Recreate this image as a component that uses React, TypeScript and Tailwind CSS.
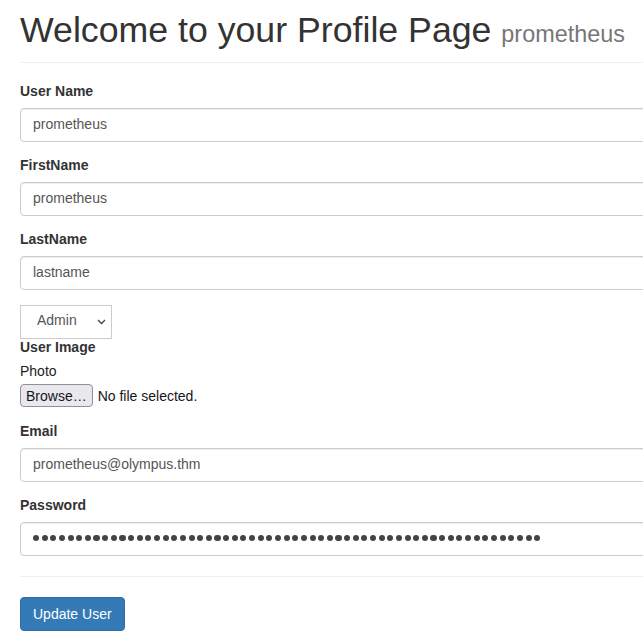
import React from "react";

const inputCls =
  "block w-full h-[34px] px-[12px] pt-[5px] pb-[7px] text-[14px] leading-[20px] text-[#555] bg-white border border-[#ccc] rounded-[4px] shadow-[inset_0_1px_1px_rgba(0,0,0,0.075)] outline-none font-['Liberation_Sans',Arial,sans-serif]";

const labelCls = "block h-[16px] mb-[9px] text-[14px] leading-[16px] font-bold text-[#333]";

function Field({ label, value }: { label: string; value: string }) {
  return (
    <div className="mb-[15px]">
      <label className={labelCls}>{label}</label>
      <input className={inputCls} type="text" value={value} readOnly />
    </div>
  );
}

export default function App() {
  const dots = Array.from({ length: 59 });
  return (
    <div className="w-full overflow-hidden bg-white font-['Liberation_Sans',Arial,sans-serif] text-[14px] leading-[20px] text-[#333]">
      <div className="w-[780px] pl-[20px]">
        <div className="mt-[10px] pb-[12px] border-b border-[#eee] mb-[20px]">
          <h1 className="h-[40px] text-[35.7px] leading-[40px] font-normal text-[#333]">
            Welcome to your Profile Page{" "}
            <small className="text-[23.4px] leading-none text-[#777] font-normal">prometheus</small>
          </h1>
        </div>

        <form onSubmit={(e) => e.preventDefault()}>
          <Field label="User Name" value="prometheus" />
          <Field label="FirstName" value="prometheus" />
          <Field label="LastName" value="lastname" />

          <div className="relative w-[92px] h-[34px]">
            <select
              className="appearance-none w-full h-full pl-[16px] pr-[20px] pb-[4px] bg-white border border-[#ccc] text-[14px] text-[#555] outline-none font-['Liberation_Sans',Arial,sans-serif]"
              defaultValue="Admin"
            >
              <option>Admin</option>
              <option>User</option>
            </select>
            <svg
              className="absolute right-[6px] top-[14px] pointer-events-none"
              width="9"
              height="6"
              viewBox="0 0 9 6"
              fill="none"
            >
              <path d="M1 1 L4.5 4.5 L8 1" stroke="#444" strokeWidth="1.3" />
            </svg>
          </div>

          <div className="mb-[15px] pb-[1px]">
            <label className={labelCls}>User Image</label>
            <div className="h-[14px] mb-[6px] text-[14px] leading-[14px] text-[#222]">Photo</div>
            <div className="flex items-center mt-[2px] h-[23px]">
              <span className="inline-flex items-center h-[23px] px-[5px] bg-[#e9e9ed] border border-[#8f8f9d] rounded-[4px] text-[14px] text-[#15141a]">
                Browse…
              </span>
              <span className="ml-[5px] text-[14px] text-[#15141a]">No file selected.</span>
            </div>
          </div>

          <Field label="Email" value="prometheus@olympus.thm" />

          <div className="mb-[15px]">
            <label className={labelCls}>Password</label>
            <div className={inputCls + " flex items-center gap-[2.55px]"} role="textbox" aria-label="Password">
              {dots.map((_, i) => (
                <span key={i} className="w-[6.1px] h-[6.1px] rounded-full bg-[#444] shrink-0" />
              ))}
            </div>
          </div>

          <hr className="mt-[20px] mb-[20px] border-0 border-t border-[#eee]" />

          <button
            type="submit"
            className="h-[34px] px-[12px] py-[6px] bg-[#337ab7] border border-[#2e6da4] rounded-[4px] text-white text-[14px] leading-[20px] font-['Liberation_Sans',Arial,sans-serif]"
          >
            Update User
          </button>
        </form>
      </div>
    </div>
  );
}
